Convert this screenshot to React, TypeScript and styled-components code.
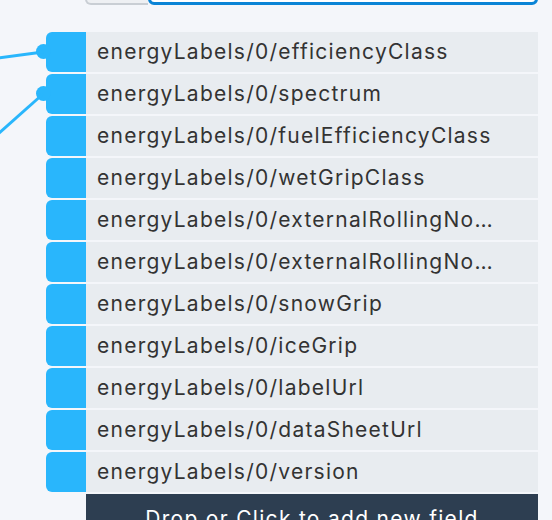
import React from "react";
import styled, { createGlobalStyle } from "styled-components";

const GlobalStyle = createGlobalStyle`
  body {
    margin: 0;
    background-color: #f4f6fa;
    font-family: Inter, "Noto Sans", sans-serif;
    overflow: hidden;
  }
`;

const Page = styled.div`
  position: relative;
  width: 552px;
  height: 520px;
  overflow: hidden;
`;

const Node = styled.div`
  display: flex;
  flex-direction: column;
  width: 492px;
  padding-left: 46px;
`;

const Header = styled.div`
  display: flex;
  height: 31px;
  margin-top: -26px;
  margin-left: 39px;
  margin-bottom: 27px;
`;

const TypeButton = styled.div`
  width: 63px;
  box-sizing: border-box;
  border: 2px solid #c9ced4;
  border-right: none;
  border-radius: 6px 0 0 6px;
  background-color: #eef0f3;
`;

const NameInput = styled.div`
  flex: 1;
  box-sizing: border-box;
  border: 3px solid #0a84d6;
  border-radius: 6px;
  background-color: #fff;
`;

const Fields = styled.div`
  display: flex;
  flex-direction: column;
  gap: 2px;
`;

const Row = styled.div`
  display: flex;
  height: 40px;
`;

const Handle = styled.div<{ $linked?: boolean }>`
  position: relative;
  width: 40px;
  flex-shrink: 0;
  background-color: #29b6fc;
  border-radius: 6px 0 0 6px;

  &::before {
    content: "";
    display: ${(p) => (p.$linked ? "block" : "none")};
    position: absolute;
    left: -10px;
    top: 12px;
    width: 15px;
    height: 15px;
    border-radius: 50%;
    background-color: #29b6fc;
  }
`;

const Label = styled.div`
  flex: 1;
  min-width: 0;
  background-color: #e8ecf0;
  color: #333;
  font-size: 21px;
  letter-spacing: 1.25px;
  line-height: 40px;
  padding: 0 44px 0 11px;
  white-space: nowrap;
  overflow: hidden;
  text-overflow: ellipsis;
`;

const DropZone = styled.div`
  margin: 2px 0 0 40px;
  padding: 11px 0;
  background-color: #2d3e51;
  color: #fff;
  font-size: 21px;
  letter-spacing: 1.3px;
  line-height: 28px;
  text-align: center;
`;

const Edges = styled.svg`
  position: absolute;
  left: 0;
  top: 0;
  pointer-events: none;
`;

const fields = [
  "efficiencyClass",
  "spectrum",
  "fuelEfficiencyClass",
  "wetGripClass",
  "externalRollingNoiseClass",
  "externalRollingNoiseValue",
  "snowGrip",
  "iceGrip",
  "labelUrl",
  "dataSheetUrl",
  "version",
];

const linked = ["efficiencyClass", "spectrum"];

export default function App() {
  return (
    <Page>
      <GlobalStyle />
      <Node>
        <Header>
          <TypeButton />
          <NameInput />
        </Header>
        <Fields>
          {fields.map((f) => (
            <Row key={f}>
              <Handle $linked={linked.includes(f)} />
              <Label>energyLabels/0/{f}</Label>
            </Row>
          ))}
        </Fields>
        <DropZone>Drop or Click to add new field</DropZone>
      </Node>
      <Edges width="60" height="160" viewBox="0 0 60 160">
        <path d="M-2 58 L43 52" stroke="#29b6fc" strokeWidth="3" fill="none" />
        <path d="M-2 134 L43 94" stroke="#29b6fc" strokeWidth="3" fill="none" />
      </Edges>
    </Page>
  );
}
